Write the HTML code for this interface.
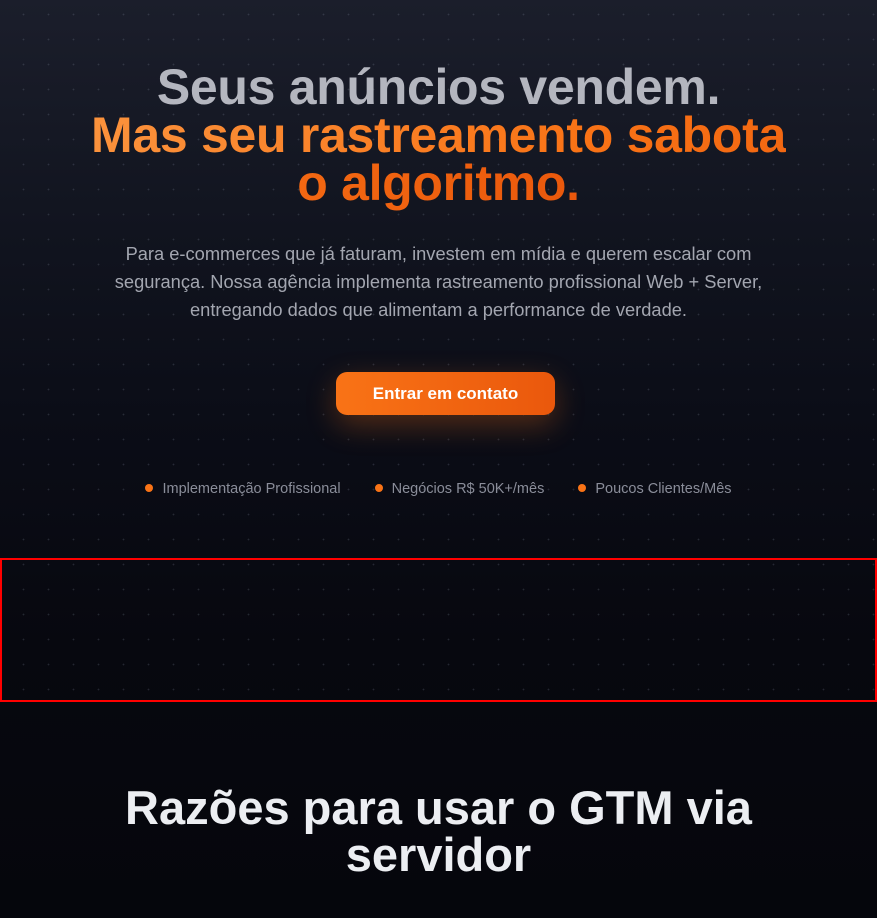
<!DOCTYPE html>
<html><head><meta charset="utf-8"><style>
html,body{margin:0;padding:0;}
body{width:877px;height:918px;overflow:hidden;position:relative;font-family:"Liberation Sans",sans-serif;
background:linear-gradient(180deg,#1b1e2b 0%,#11141f 25%,#0b0d17 45%,#07080f 70%,#05060c 100%);}
.dots{position:absolute;left:0;top:0;width:877px;height:700px;
background-image:radial-gradient(circle,rgba(140,150,170,0.22) 0.7px,transparent 1px);
background-size:25px 25px;background-position:11px 2px;}
h1{position:absolute;top:63px;left:0;width:877px;margin:0;text-align:center;font-size:50px;line-height:48px;font-weight:700;letter-spacing:-0.3px}
.g{color:#b4b6bf}
.o{background:linear-gradient(90deg,#fb923c,#f97316 50%,#ea580c);-webkit-background-clip:text;background-clip:text;color:transparent}
p{position:absolute;top:240px;left:78px;width:721px;margin:0;text-align:center;color:#a3a6b0;font-size:18.3px;line-height:28px}
.btn{position:absolute;left:336px;top:372px;width:219px;height:43px;border-radius:11px;background:linear-gradient(90deg,#f97316,#ea580c);color:#fff;font-weight:700;font-size:17px;display:flex;align-items:center;justify-content:center;box-shadow:0 10px 30px rgba(249,115,22,0.3)}
.bul{position:absolute;top:481px;left:0;width:877px;text-align:center;font-size:14.5px;color:#8a8d99}
.bul span{margin:0 17px}
.bul span:before{content:"";display:inline-block;width:8px;height:8px;border-radius:50%;background:#f97316;margin-right:9px;vertical-align:1px}
.box{position:absolute;left:0;top:558px;width:873px;height:140px;border:2px solid #ff0000}
h2{position:absolute;top:784px;left:0;width:877px;margin:0;text-align:center;color:#eceef2;font-size:47px;line-height:47px;font-weight:700}
</style></head><body>
<div class="dots"></div>
<h1><span class="g">Seus anúncios vendem.</span><br><span class="o">Mas seu rastreamento sabota<br>o algoritmo.</span></h1>
<p>Para e-commerces que já faturam, investem em mídia e querem escalar com segurança. Nossa agência implementa rastreamento profissional Web + Server, entregando dados que alimentam a performance de verdade.</p>
<div class="btn">Entrar em contato</div>
<div class="bul"><span>Implementação Profissional</span><span>Negócios R$ 50K+/mês</span><span>Poucos Clientes/Mês</span></div>
<div class="box"></div>
<h2>Razões para usar o GTM via<br>servidor</h2>
</body></html>
